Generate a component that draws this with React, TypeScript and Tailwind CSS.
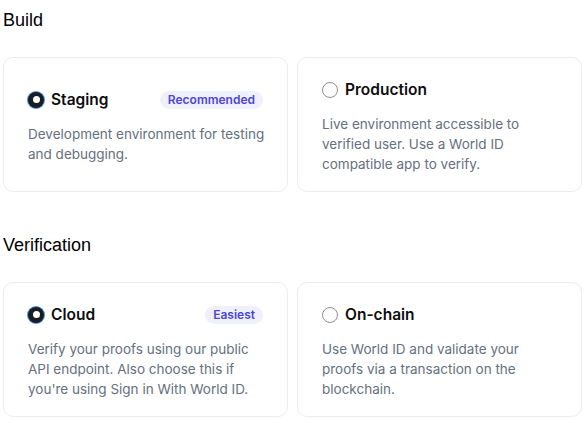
import { ReactNode } from "react";

interface OptionProps {
  title: string;
  description: string;
  badge?: string;
  selected?: boolean;
}

const Radio = ({ selected }: { selected?: boolean }) =>
  selected ? (
    <span className="flex h-4 w-4 items-center justify-center rounded-full bg-[#191c20] shadow-[0_0_0_1px_#4a90e2]">
      <span className="h-[7px] w-[7px] rounded-full bg-white" />
    </span>
  ) : (
    <span className="h-4 w-4 rounded-full border-[1.5px] border-[#8e8e93] bg-white" />
  );

const OptionCard = ({ title, description, badge, selected }: OptionProps) => (
  <div className="flex h-[135px] flex-col justify-center gap-[14px] rounded-[10px] border border-[#ededf0] bg-white px-6 pt-1">
    <div className="flex h-5 items-center justify-between">
      <div className="flex items-center gap-[7px]">
        <Radio selected={selected} />
        <span className="text-[15.5px] font-semibold text-[#0d0d0d]">
          {title}
        </span>
      </div>
      {badge ? (
        <span className="rounded-full bg-[#eff0fc] px-2 py-[1px] text-[12px] font-semibold leading-4 text-[#4c45d8]">
          {badge}
        </span>
      ) : null}
    </div>
    <p className="-mr-1 text-[13.5px] leading-5 text-[#657080]">{description}</p>
  </div>
);

const Section = ({ title, children }: { title: string; children: ReactNode }) => (
  <section>
    <h2 className="font-['Liberation_Sans',Arial,sans-serif] text-[18px] leading-6 text-black">
      {title}
    </h2>
    <div className="mt-[25px] grid grid-cols-2 gap-[9px]">{children}</div>
  </section>
);

export default function App() {
  return (
    <div className="flex h-[427px] w-[585px] flex-col gap-[41px] bg-white px-[3px] pt-2 font-['Inter',sans-serif]">
      <Section title="Build">
        <OptionCard
          title="Staging"
          badge="Recommended"
          selected
          description="Development environment for testing and debugging."
        />
        <OptionCard
          title="Production"
          description="Live environment accessible to verified user. Use a World ID compatible app to verify."
        />
      </Section>
      <Section title="Verification">
        <OptionCard
          title="Cloud"
          badge="Easiest"
          selected
          description="Verify your proofs using our public API endpoint. Also choose this if you're using Sign in With World ID."
        />
        <OptionCard
          title="On-chain"
          description="Use World ID and validate your proofs via a transaction on the blockchain."
        />
      </Section>
    </div>
  );
}
